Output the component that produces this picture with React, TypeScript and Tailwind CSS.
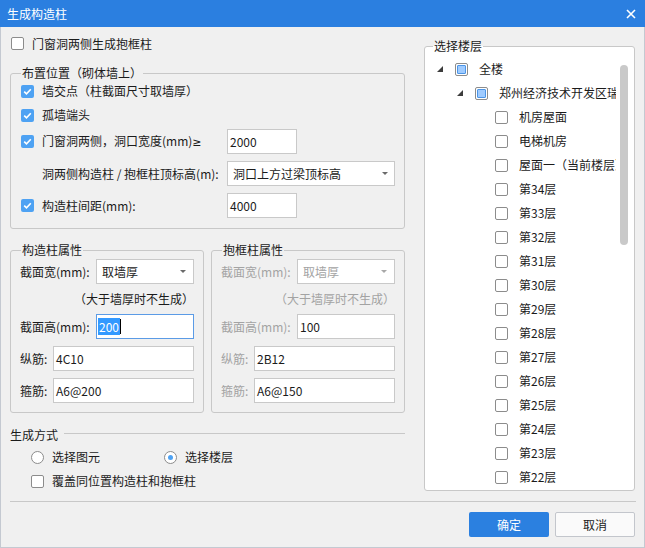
import React from "react";

function Check({ checked }: { checked?: boolean }) {
  if (checked) {
    return (
      <span className="w-[13px] h-[13px] rounded-[2px] bg-[#4ea2f3] flex items-center justify-center shrink-0">
        <svg width="11" height="11" viewBox="0 0 11 11">
          <path d="M2.2 5.6 L4.5 7.9 L8.8 3.3" fill="none" stroke="#fff" strokeWidth="1.6" />
        </svg>
      </span>
    );
  }
  return <span className="w-[13px] h-[13px] rounded-[2px] border border-[#8c8c8c] bg-white shrink-0" />;
}

function Indet() {
  return (
    <span className="w-[13px] h-[13px] rounded-[2px] border border-[#8c8c8c] bg-white flex items-center justify-center shrink-0">
      <span className="w-[9px] h-[9px] rounded-[1px] bg-[#9fcbff] border border-[#4c95e6]" />
    </span>
  );
}

function Radio({ checked }: { checked?: boolean }) {
  return (
    <span className="w-[13px] h-[13px] rounded-full border border-[#8c8c8c] bg-white flex items-center justify-center shrink-0">
      {checked && <span className="w-[5px] h-[5px] rounded-full bg-[#4ea2f3]" />}
    </span>
  );
}

function Arrow({ gray }: { gray?: boolean }) {
  return (
    <svg width="6" height="3" viewBox="0 0 6 3">
      <polygon points="0,0 6,0 3,3" fill={gray ? "#a8a8a8" : "#6a6a6a"} />
    </svg>
  );
}

function Tri() {
  return (
    <svg width="6" height="6" viewBox="0 0 6 6" className="shrink-0">
      <polygon points="6,0 6,6 0,6" fill="#3c3c3c" />
    </svg>
  );
}

function PropGroup({ title, disabled, w, h, z, g }: { title: string; disabled?: boolean; w: string; h: string; z: string; g: string }) {
  const lbl = disabled ? "text-[#a3a3a3]" : "";
  return (
    <div className="relative flex-1 h-[163px] border border-[#c8c8c8] rounded-[3px] pl-[9px] pr-[9px] pt-[8px] flex flex-col">
      <span className="absolute left-[10px] top-[-9px] px-[1px] bg-[#f0f0f0]">{title}</span>
      <div className="h-[25px] flex items-center">
        <span className={`w-[76px] shrink-0 ${lbl}`}>截面宽(mm):</span>
        <div className="flex-1 h-[25px] border border-[#c9c9c9] bg-white flex items-center justify-between pl-[5px] pr-[7px]">
          <span className={disabled ? "text-[#a3a3a3]" : ""}>{w}</span>
          <Arrow gray={disabled} />
        </div>
      </div>
      <div className={`h-[30px] flex items-center justify-end ${lbl}`}>（大于墙厚时不生成）</div>
      <div className="h-[25px] flex items-center">
        <span className={`w-[76px] shrink-0 ${lbl}`}>截面高(mm):</span>
        {disabled ? (
          <div className="flex-1 h-[25px] border border-[#c9c9c9] bg-white flex items-center pl-[2px]">{h}</div>
        ) : (
          <div className="flex-1 h-[25px] border border-[#5b9be6] bg-white flex items-center pl-[1px]">
            <span className="bg-[#3399ff] text-white px-[1px] leading-[17px]">{h}</span>
            <span className="w-px h-[15px] bg-black" />
          </div>
        )}
      </div>
      <div className="mt-[7px] h-[25px] flex items-center">
        <span className={`w-[33px] shrink-0 ${lbl}`}>纵筋:</span>
        <div className="flex-1 h-[25px] border border-[#c9c9c9] bg-white flex items-center pl-[2px]">{z}</div>
      </div>
      <div className="mt-[7px] h-[25px] flex items-center">
        <span className={`w-[33px] shrink-0 ${lbl}`}>箍筋:</span>
        <div className="flex-1 h-[25px] border border-[#c9c9c9] bg-white flex items-center pl-[2px]">{g}</div>
      </div>
    </div>
  );
}

const floors = ["第34层", "第33层", "第32层", "第31层", "第30层", "第29层", "第28层", "第27层", "第26层", "第25层", "第24层", "第23层", "第22层"];

export default function App() {
  return (
    <div className="w-[645px] h-[548px] flex flex-col bg-[#f0f0f0] text-[12px] leading-[16px] text-[#1b1b1b] font-['Noto_Sans_CJK_SC',sans-serif] [text-spacing-trim:space-all]">
      <div className="h-[27px] shrink-0 bg-[#2b7fe0] flex items-center justify-between pl-[7px] pr-[9px] text-white">
        <span>生成构造柱</span>
        <svg width="10" height="10" viewBox="0 0 10 10">
          <path d="M1 1L9 9M9 1L1 9" stroke="#fff" strokeWidth="1.6" />
        </svg>
      </div>
      <div className="flex-1 flex flex-col border-x border-b border-[#c4c9d1]">
        <div className="h-[464px] flex shrink-0">
          <div className="ml-[9px] w-[395px] flex flex-col">
            <div className="mt-[8px] h-[17px] flex items-center pl-[1px]">
              <Check />
              <span className="ml-[8px]">门窗洞两侧生成抱框柱</span>
            </div>
            <div className="relative mt-[21px] h-[156px] border border-[#c8c8c8] rounded-[3px] pl-[10px] pt-[7px] flex flex-col">
              <span className="absolute left-[10px] top-[-9px] px-[1px] bg-[#f0f0f0]">布置位置（砌体墙上）</span>
              <div className="h-[20px] flex items-center">
                <Check checked />
                <span className="ml-[8px]">墙交点（柱截面尺寸取墙厚）</span>
              </div>
              <div className="mt-[4px] h-[20px] flex items-center">
                <Check checked />
                <span className="ml-[8px]">孤墙端头</span>
              </div>
              <div className="mt-[4px] h-[25px] flex items-center">
                <div className="w-[206px] flex items-center shrink-0">
                  <Check checked />
                  <span className="ml-[8px]">
                    门窗洞两侧，洞口宽度(mm)<span className="font-['DejaVu_Sans',sans-serif] text-[11px]">≥</span>
                  </span>
                </div>
                <div className="w-[70px] h-[25px] border border-[#c9c9c9] bg-white flex items-center pl-[2px]">2000</div>
              </div>
              <div className="mt-[7px] h-[25px] flex items-center">
                <div className="w-[206px] pl-[21px] shrink-0 whitespace-nowrap">洞两侧构造柱 / 抱框柱顶标高(m):</div>
                <div className="w-[168px] h-[25px] border border-[#c9c9c9] bg-white flex items-center justify-between pl-[5px] pr-[6px]">
                  <span>洞口上方过梁顶标高</span>
                  <Arrow />
                </div>
              </div>
              <div className="mt-[7px] h-[25px] flex items-center">
                <div className="w-[206px] flex items-center shrink-0">
                  <Check checked />
                  <span className="ml-[8px]">构造柱间距(mm):</span>
                </div>
                <div className="w-[70px] h-[25px] border border-[#c9c9c9] bg-white flex items-center pl-[2px]">4000</div>
              </div>
            </div>
            <div className="mt-[21px] flex gap-[7px]">
              <PropGroup title="构造柱属性" w="取墙厚" h="200" z="4C10" g="A6@200" />
              <PropGroup title="抱框柱属性" disabled w="取墙厚" h="100" z="2B12" g="A6@150" />
            </div>
            <div className="mt-[14px] h-[16px] flex">
              <span>生成方式</span>
              <div className="ml-[6px] mt-[6px] flex-1 h-px bg-[#c8c8c8]" />
            </div>
            <div className="mt-[6px] h-[16px] flex items-center pl-[21px]">
              <div className="w-[133px] flex items-center">
                <Radio />
                <span className="ml-[8px]">选择图元</span>
              </div>
              <div className="flex items-center">
                <Radio checked />
                <span className="ml-[8px]">选择楼层</span>
              </div>
            </div>
            <div className="mt-[8px] h-[16px] flex items-center pl-[21px]">
              <Check />
              <span className="ml-[8px]">覆盖同位置构造柱和抱框柱</span>
            </div>
          </div>
          <div className="ml-[19px] mt-[19px] w-[211px] h-[445px] relative border border-[#c8c8c8] rounded-[3px] bg-white flex">
            <span className="absolute left-[8px] top-[-9px] px-[1px] bg-[linear-gradient(to_bottom,#f0f0f0_50%,#ffffff_50%)]">选择楼层</span>
            <div className="w-[191px] overflow-hidden pt-[10px] flex flex-col whitespace-nowrap">
              <div className="h-[24px] flex items-center pl-[12px]">
                <Tri />
                <span className="ml-[12px]"><Indet /></span>
                <span className="ml-[11px]">全楼</span>
              </div>
              <div className="h-[24px] flex items-center pl-[32px]">
                <Tri />
                <span className="ml-[12px]"><Indet /></span>
                <span className="ml-[11px]">郑州经济技术开发区瑞</span>
              </div>
              {["机房屋面", "电梯机房", "屋面一（当前楼层）", ...floors].map((f) => (
                <div key={f} className="h-[24px] flex items-center pl-[70px]">
                  <Check />
                  <span className="ml-[11px]">{f}</span>
                </div>
              ))}
            </div>
            <div className="w-[18px] pt-[18px] pl-[4px]">
              <div className="w-[8px] h-[180px] rounded-full bg-[#c9c9c9]" />
            </div>
          </div>
        </div>
        <div className="mt-[10px] ml-[9px] mr-[8px] h-px bg-[#c8c8c8]" />
        <div className="mt-[10px] flex justify-end gap-[6px] pr-[9px]">
          <div className="w-[80px] h-[25px] rounded-[2px] bg-[#2b80e0] text-white flex items-center justify-center">确定</div>
          <div className="w-[80px] h-[25px] rounded-[2px] border border-[#c3c6cc] bg-[#fafafa] flex items-center justify-center">取消</div>
        </div>
      </div>
    </div>
  );
}
